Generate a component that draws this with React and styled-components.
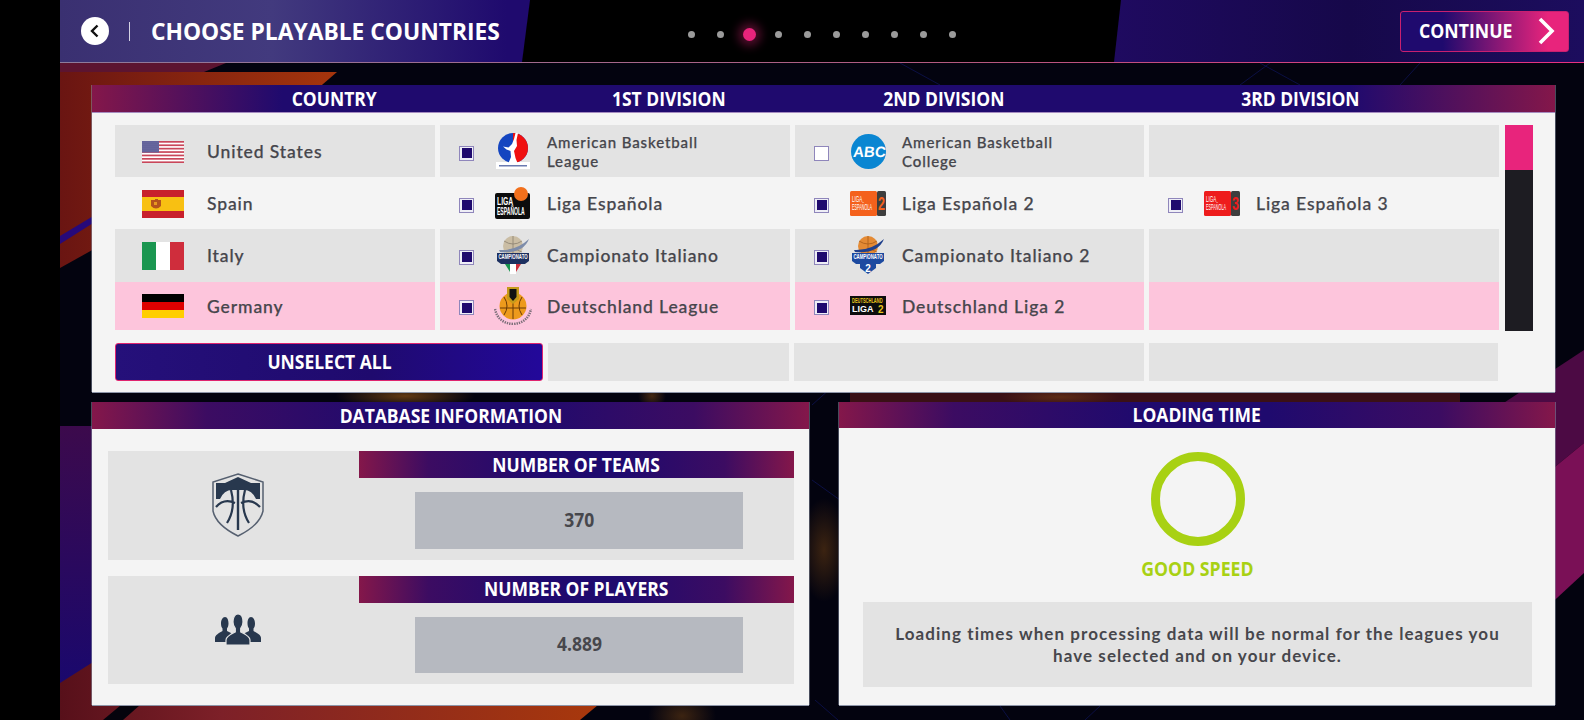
import React from "react";
import styled, { createGlobalStyle } from "styled-components";

const Global = createGlobalStyle`
  html, body { margin: 0; padding: 0; background: #000; overflow: hidden; }
  * { box-sizing: border-box; }
`;
const condensed = `"Open Sans", "Liberation Sans", sans-serif`;
const bodyFont = `Lato, "Noto Sans", sans-serif`;

const Screen = styled.div`position: relative; width: 1584px; height: 720px; background: #000; overflow: hidden;`;
const Backdrop = styled.svg`position: absolute; left: 0; top: 0; width: 1584px; height: 720px;`;
const Stage = styled.div`position: relative; margin-left: 60px; height: 720px; display: flex; flex-direction: column;`;

const TopBar = styled.header`
  display: flex; height: 63px; flex: none; background: #000; padding-bottom: 1px; position: relative;
  &::after { content: ""; position: absolute; left: 0; right: 0; bottom: 0; height: 1.5px; background: linear-gradient(90deg, #8d7c9c, #b5587f 60%, #e8307f); }
`;
const TitleTab = styled.div`
  width: 470px; display: flex; align-items: center; padding-left: 21px;
  background: linear-gradient(90deg, #3a3071 0%, #423a7e 45%, #1f0a6e 95%);
  clip-path: polygon(0 0, 100% 0, 462px 100%, 0 100%);
`;
const BackButton = styled.button`
  width: 28px; height: 28px; border-radius: 50%; background: #fff; border: 0; padding: 0;
  display: flex; align-items: center; justify-content: center;
`;
const Divider = styled.span`width: 1px; height: 19px; background: #d5d3e4; margin: 0 21px 0 20px;`;
const Condensed = styled.span`
  display: inline-block; white-space: nowrap; font-family: ${condensed}; font-weight: 700; color: #fff;
  transform: scaleX(${p => p.$sx || 0.92});
`;
const Title = styled(Condensed)`font-size: 24px; transform-origin: left center; line-height: 1; transform: scaleX(.95);`;
const Pager = styled.nav`flex: 1; display: flex; align-items: center; justify-content: center; gap: 22px; padding-top: 7px;`;
const Dot = styled.i`
  width: 7px; height: 7px; border-radius: 50%; background: #9b9b9b; display: block;
  ${p => p.$on && `width: 13px; height: 13px; margin: 0 -3px; background: #e8247c; box-shadow: 0 0 10px 5px rgba(232,36,124,.35);`}
`;
const ActionTab = styled.div`
  width: 470px; display: flex; align-items: center; justify-content: flex-end; padding-right: 15px;
  background: linear-gradient(90deg, #1f0a60, #16084a 50%, #1c0d5e);
  clip-path: polygon(7px 0, 100% 0, 100% 100%, 0 100%);
`;
const ContinueButton = styled.button`
  width: 169px; height: 41px; border: 1px solid #c8206f; border-radius: 3px; padding: 0 12px 0 18px;
  display: flex; align-items: center; justify-content: space-between;
  background: linear-gradient(90deg, #1f0a6e 0%, #1f0a6e 25%, #e8247c 88%);
`;
const ContinueLabel = styled(Condensed)`font-size: 19px; transform-origin: left center; transform: scaleX(.93);`;

const Content = styled.main`flex: 1; position: relative; padding: 22px 29px 15px 32px; display: flex; flex-direction: column; gap: 10px;`;
const Panel = styled.section`background: #f4f4f4; box-shadow: 0 1px 0 #8d95a8, 1px 0 0 rgba(140,150,170,.5), -1px 0 0 rgba(140,150,170,.5); display: flex; flex-direction: column;`;
const TablePanel = styled(Panel)`height: 307px;`;
const Heading = styled.div`
  height: ${p => p.$h || 27}px; flex: none; display: flex; align-items: center; justify-content: center; padding-top: 1px;
  background: linear-gradient(90deg, #84174a 0%, #3c0c62 16%, #1f0a6e 42%, #1f0a6e 60%, #3c0c62 84%, #84174a 100%);
`;
const HeadingLabel = styled(Condensed)`font-size: 19px; line-height: 1;`;
const TableHead = styled(Heading)`
  display: grid; grid-template-columns: 484px 186px 363px 351.5px 1fr; justify-items: center; align-items: center;
  background: linear-gradient(90deg, #84174a 0%, #1f0a6e 13%, #1f0a6e 86%, #84174a 100%);
  box-shadow: 0 1px 0 #a58cc0;
`;
const TableBody = styled.div`padding: 13px 0 0 23px;`;
const ListArea = styled.div`display: flex; gap: 6px;`;
const Rows = styled.div`width: 1384px; display: grid; grid-template-columns: 320px 350px 349px 350px; column-gap: 5px; grid-auto-rows: min-content;`;
const Cell = styled.div`
  height: ${p => p.$h}px; display: flex; align-items: center;
  background: ${p => p.$tone === "pink" ? "#fdc5dc" : p.$tone === "gray" ? "#e3e3e3" : "transparent"};
  padding-left: ${p => p.$country ? 27 : 19}px;
`;
const FlagSlot = styled.span`width: 42px; display: flex; flex: none; margin: 1px 23px 0 0;`;
const CellText = styled.span`
  font-family: ${bodyFont}; font-weight: 500; color: #46464c; letter-spacing: .9px; padding-top: 2px;
  -webkit-text-stroke: .25px #46464c;
  font-size: ${p => p.$small ? 15 : 17.5}px; line-height: ${p => p.$small ? 19 : 22}px; white-space: pre-line;
`;
const Check = styled.span`
  width: 15px; height: 15px; flex: none; margin-top: 4px; border: 1px solid #8f86bb; padding: 1.5px; background: #eeeef6; display: block;
  ${p => !p.$on && "background: #fff;"}
  &::after { content: ""; display: ${p => p.$on ? "block" : "none"}; width: 100%; height: 100%; background: #1f0a6e; }
`;
const LogoSlot = styled.span`width: 40px; height: 44px; flex: none; margin: 0 14px 0 19px; display: flex; align-items: center; justify-content: center;`;
const Scrollbar = styled.div`width: 28px; height: 206px; background: #1d1c22; flex: none;`;
const ScrollThumb = styled.div`height: 45px; background: #e8247c;`;
const Footer = styled.div`display: grid; grid-template-columns: 428px 241px 350px 349px; column-gap: 5px; margin-top: 12px;`;
const FooterCell = styled.div`height: 38px; background: #e3e3e3;`;
const UnselectButton = styled.button`
  height: 38px; border: 1px solid #e0246f; border-radius: 3px; display: flex; align-items: center; justify-content: center;
  background: linear-gradient(90deg, #25107a, #1f0a6e 60%, #23089a); padding: 0;
`;

const BottomRow = styled.div`display: grid; grid-template-columns: 717px 716px; column-gap: 30px; flex: 1;`;
const InfoBody = styled.div`flex: 1; padding: 22px 15px 0 16px; display: flex; flex-direction: column; gap: 16px;`;
const StatRow = styled.div`height: 108.5px; background: #e3e3e3; display: grid; grid-template-columns: 251px 1fr;`;
const StatIcon = styled.div`display: flex; align-items: center; justify-content: center; padding-left: 9px;`;
const StatValue = styled.div`
  height: 56.5px; margin: 14px 51px 0 56px; background: #b6b9c0; display: flex; align-items: center; justify-content: center;
`;
const ValueText = styled(Condensed)`font-size: 19px; color: #47474c; line-height: 1;`;
const LoadingBody = styled.div`flex: 1; padding: 24px 23px 18px 24px; display: flex; flex-direction: column; align-items: center;`;
const Ring = styled.div`width: 94px; height: 94px; border-radius: 50%; border: 9.5px solid #a8d113; flex: none;`;
const Speed = styled(Condensed)`font-size: 19px; font-weight: 700; line-height: 1; color: #a8d113; margin-top: 14px; transform: scaleX(.93);`;
const Notice = styled.div`
  width: 100%; height: 85px; margin-top: 23px; background: #e3e3e3; display: flex; align-items: center; justify-content: center; text-align: center;
  font-family: ${bodyFont}; font-weight: 700; font-size: 17px; line-height: 22px; letter-spacing: 1.08px; color: #47474c;
`;

const Backgrounds = () => (
  <Backdrop viewBox="0 0 1584 720" aria-hidden="true">
    <defs>
      <linearGradient id="rg" x1="0" x2="1" y1="0" y2="0"><stop offset="0" stopColor="#6a1512" /><stop offset="1" stopColor="#a5350c" /></linearGradient>
      <linearGradient id="rb" x1="0" x2="1" y1="0" y2="0"><stop offset="0" stopColor="#57101a" /><stop offset=".3" stopColor="#7d2028" /><stop offset="1" stopColor="#a8380c" /></linearGradient>
      <linearGradient id="pv" x1="0" x2="0" y1="0" y2="1"><stop offset="0" stopColor="#3c0a4c" /><stop offset="1" stopColor="#170870" /></linearGradient>
      <radialGradient id="gl"><stop offset="0" stopColor="#8a5014" stopOpacity=".7" /><stop offset="1" stopColor="#8a5014" stopOpacity="0" /></radialGradient>
    </defs>
    <rect x="60" y="60" width="1524" height="660" fill="#03030f" />
    <rect x="60" y="426" width="100" height="280" fill="url(#pv)" />
    <polygon points="60,72 337,72 200,190 60,268" fill="url(#rg)" />
    <polygon points="60,63 226,63 204,72 60,72" fill="#5c1430" />
    <polygon points="60,236 120,200 120,206 60,244" fill="#27097a" />
    <polygon points="60,683 120,645 598,645 598,705 580,720 60,720" fill="url(#rb)" />
    <polygon points="121,705 140,705 123,720 103,720" fill="#05030c" />
    <polygon points="1490,412 1584,350 1584,443 1490,520" fill="#4c0a44" />
    <polygon points="1490,520 1584,443 1584,573 1490,660" fill="#7a1056" />
    <ellipse cx="405" cy="396" rx="70" ry="12" fill="url(#gl)" />
    <ellipse cx="652" cy="396" rx="14" ry="12" fill="url(#gl)" opacity=".7" />
    <ellipse cx="682" cy="716" rx="34" ry="24" fill="url(#gl)" opacity=".6" />
    <ellipse cx="824" cy="550" rx="24" ry="52" fill="url(#gl)" opacity=".6" />
    <rect x="850" y="393" width="610" height="9" fill="#3a1016" />
    <ellipse cx="1060" cy="397" rx="60" ry="8" fill="url(#gl)" opacity=".6" />
    <g stroke="#101868" strokeWidth="1" fill="none" opacity=".6">
      <path d="M1270 63 L1240 85 M1260 63 L1300 85 M1420 63 L1400 85 M900 63 L940 85 M812 405 L840 380 M812 480 L840 500 M815 700 L838 720 M1000 706 L1010 720 M1100 706 L1085 720" />
    </g>
  </Backdrop>
);

const LogoFont = "Liberation Sans, Open Sans, sans-serif";
const Squeezed = ({ x, y, sx = 0.6, size, fill = "#fff", weight = 700, anchor, children }) => (
  <text transform={`translate(${x} ${y}) scale(${sx} 1)`} textAnchor={anchor} fontFamily={LogoFont} fontWeight={weight} fontSize={size} fill={fill}>{children}</text>
);

const USFlag = () => (
  <svg width="42" height="22" viewBox="0 0 42 22">
    <defs><pattern id="stars" width="2" height="2" patternUnits="userSpaceOnUse"><circle cx="1" cy="1" r=".45" fill="#c8c8e0" /></pattern></defs>
    <rect width="42" height="22" fill="#fff" />
    {[0, 3.4, 6.8, 10.2, 13.6, 17, 20.4].map(y => <rect key={y} y={y} width="42" height="1.7" fill="#c9475a" />)}
    <rect width="17" height="11.5" fill="#565692" />
    <rect width="17" height="11.5" fill="url(#stars)" />
  </svg>
);
const SpainFlag = () => (
  <svg width="42" height="28" viewBox="0 0 42 28">
    <rect width="42" height="28" fill="#c8202c" /><rect y="7" width="42" height="14" fill="#f8c012" />
    <path d="M9 10h4v-1h3v1h3v6q-5 5-10 0z" fill="#b5531c" /><rect x="12" y="12" width="3" height="3" fill="#e89a20" />
  </svg>
);
const ItalyFlag = () => (
  <svg width="42" height="28" viewBox="0 0 42 28">
    <rect width="14" height="28" fill="#1a9650" /><rect x="14" width="14" height="28" fill="#fff" /><rect x="28" width="14" height="28" fill="#cf2d3c" />
  </svg>
);
const GermanyFlag = () => (
  <svg width="42" height="24" viewBox="0 0 42 24">
    <rect width="42" height="8" fill="#000" /><rect y="8" width="42" height="8" fill="#dd0000" /><rect y="16" width="42" height="8" fill="#ffce00" />
  </svg>
);
const AmericanLogo = () => (
  <svg width="34" height="36" viewBox="0 0 34 36">
    <rect x="0" y="29" width="34" height="7" fill="#fff" />
    <circle cx="17" cy="15" r="15" fill="#1445c0" />
    <path d="M17 0a15 15 0 0 1 0 30z" fill="#f01010" />
    <path d="M19.500 0h2.500l-1.500 7 .5 6-3 5 1.500 7 2 5h-9l2.500-6-.5-6-4-1.500-3.500-3 5.500 1 3.500-3.500 2-5z" fill="#fff" />
    <rect x="3" y="32" width="28" height="1.500" fill="#6a7ab0" />
  </svg>
);
const LigaLogo = () => (
  <svg width="36" height="33" viewBox="0 0 36 33">
    <rect x="0" y="6" width="35" height="26" rx="2" fill="#0c0c0c" />
    <Squeezed x={2} y={18} sx={0.62} size={11}>LIGA</Squeezed>
    <Squeezed x={2} y={28} sx={0.46} size={11}>ESPAÑOLA</Squeezed>
    <circle cx="26" cy="7" r="7" fill="#f2701c" />
  </svg>
);
const CampionatoLogo = ({ two }) => (
  <svg width="34" height="38" viewBox="0 0 34 38">
    <circle cx="17" cy="10" r="10" fill={two ? "#e48a34" : "#cabda4"} />
    <path d="M17 0v20M8 5q9 6 18 0M8 16q9-5 18 0" stroke={two ? "#a85a18" : "#8a8070"} strokeWidth=".8" fill="none" />
    <path d="M3 14 Q20 15 33 3 Q27 18 4 16z" fill={two ? "#20408c" : "#7d8caa"} />
    {two && <path d="M9 26h16v6l-8 6-8-6z" fill="#1d4aa0" />}
    <path d="M1 17h32v8l-4 3h-24l-4-3z" fill={two ? "#1d4aa0" : "#1d3060"} />
    <Squeezed x={17} y={23} sx={0.62} size={7} anchor="middle">CAMPIONATO</Squeezed>
    {two ? (
      <Squeezed x={17} y={36} sx={1} size={10} anchor="middle" fill="#fff">2</Squeezed>
    ) : (
      <g><path d="M9 28h5v8z" fill="#1a9650" /><path d="M14 28h6v10h-6z" fill="#fff" /><path d="M20 28h5l-5 8z" fill="#cf2d3c" /></g>
    )}
  </svg>
);
const DeutschLogo = () => (
  <svg width="38" height="38" viewBox="0 0 38 38">
    <circle cx="19" cy="19" r="13.500" fill="#ed9a1c" />
    <path d="M6 21h26M19 6v26M10 10q6 9 0 18M28 10q-6 9 0 18" stroke="#6a3a06" strokeWidth="1" fill="none" />
    <path d="M13 0h12v12l-6 5-6-5z" fill="#c59a1a" /><path d="M15.500 2h7v8l-3.500 4-3.500-4z" fill="#111" />
    <path d="M1 22 Q4 36 19 37 Q34 36 37 22" stroke="#7d6f7a" strokeWidth="2.500" strokeDasharray="1.400 1" fill="none" />
  </svg>
);
const AbcLogo = () => (
  <svg width="35" height="35" viewBox="0 0 35 35">
    <circle cx="17.500" cy="17.500" r="17.500" fill="#0a86d2" />
    <text transform="translate(18 23) skewX(-6)" textAnchor="middle" fontFamily={LogoFont} fontWeight="700" fontSize="15" fill="#fff">ABC</text>
  </svg>
);
const LigaBadge = ({ color, n }) => (
  <svg width="36" height="25" viewBox="0 0 36 25">
    <rect width="27" height="25" rx="1.500" fill={color} />
    <rect x="27" width="9" height="25" rx="1.500" fill="#3e3e3e" />
    <Squeezed x={31.5} y={19} sx={0.7} size={18} anchor="middle" fill={color}>{n}</Squeezed>
    <Squeezed x={2} y={11} sx={0.5} size={9} weight={400}>LIGA</Squeezed>
    <Squeezed x={2} y={19} sx={0.42} size={9} weight={400}>ESPAÑOLA</Squeezed>
  </svg>
);
const DeutschBadge = () => (
  <svg width="36" height="19" viewBox="0 0 36 19">
    <rect width="36" height="19" fill="#0d0d0d" />
    <Squeezed x={2} y={7} sx={0.62} size={6.5} fill="#e8c41c">DEUTSCHLAND</Squeezed>
    <Squeezed x={2} y={16} sx={1} size={9}>LIGA</Squeezed>
    <Squeezed x={28} y={16.5} sx={1} size={10} fill="#e8c41c">2</Squeezed>
  </svg>
);
const ShieldIcon = () => (
  <svg width="52" height="64" viewBox="0 0 52 64">
    <path d="M26 1 L51 9 V38 Q48 52 26 63 Q4 52 1 38 V9 Z" fill="none" stroke="#566070" strokeWidth="1.500" />
    <path d="M4 10 L13 10 L26 4 L39 10 L48 10 V26 L44 26 Q40 17 32 17 H20 Q12 17 8 26 H4 Z" fill="#28384e" />
    <path d="M26 13 V57" stroke="#28384e" strokeWidth="2.400" />
    <path d="M19 17 Q24 36 15 50 M33 17 Q28 36 37 50 M4 34 Q12 25 23 30 M48 34 Q40 25 29 30" stroke="#28384e" strokeWidth="2.200" fill="none" />
  </svg>
);
const PeopleIcon = () => (
  <svg width="46" height="31" viewBox="0 0 46 31">
    <g fill="#28384e">
      <path d="M10 3c2.500 0 3.500 3 3.500 6.500 0 2-.7 4-1.500 5v2.500l4 2-3 9H0v-4c0-3 4-5 7.500-7v-2.500c-1-1-1.500-3-1.500-5C6 6 7.500 3 10 3z" />
      <path d="M36 3c-2.500 0-3.500 3-3.500 6.500 0 2 .7 4 1.500 5v2.500l-4 2 3 9h13v-4c0-3-4-5-7.500-7v-2.500c1-1 1.500-3 1.500-5C40 6 38.500 3 36 3z" />
      <path d="M23 0c3.500 0 5 4 5 8 0 3-1 5-2.300 6.500V18c4 2 9.300 4 9.300 8v5H11v-5c0-4 5.300-6 9.300-8v-3.500C19 13 18 11 18 8c0-4 1.500-8 5-8z" stroke="#e3e3e3" strokeWidth="1.200" />
    </g>
  </svg>
);

const rows = [
  { tone: "gray", h: 52, flag: <USFlag />, name: "United States", cells: [
    { on: true, logo: <AmericanLogo />, text: "American Basketball\nLeague", small: true },
    { on: false, logo: <AbcLogo />, text: "American Basketball\nCollege", small: true }, null] },
  { tone: "none", h: 52, flag: <SpainFlag />, name: "Spain", cells: [
    { on: true, logo: <LigaLogo />, text: "Liga Española" },
    { on: true, logo: <LigaBadge color="#f4611c" n="2" />, text: "Liga Española 2" },
    { on: true, logo: <LigaBadge color="#ee1c1c" n="3" />, text: "Liga Española 3" }] },
  { tone: "gray", h: 52.5, flag: <ItalyFlag />, name: "Italy", cells: [
    { on: true, logo: <CampionatoLogo />, text: "Campionato Italiano" },
    { on: true, logo: <CampionatoLogo two />, text: "Campionato Italiano 2" }, null] },
  { tone: "pink", h: 48.5, flag: <GermanyFlag />, name: "Germany", cells: [
    { on: true, logo: <DeutschLogo />, text: "Deutschland League" },
    { on: true, logo: <DeutschBadge />, text: "Deutschland Liga 2" }, null] },
];
const heads = ["COUNTRY", "1ST DIVISION", "2ND DIVISION", "3RD DIVISION"];
const stats = [
  { label: "NUMBER OF TEAMS", value: "370", icon: <ShieldIcon /> },
  { label: "NUMBER OF PLAYERS", value: "4.889", icon: <PeopleIcon /> },
];

export default function App() {
  return (
    <Screen>
      <Global />
      <Backgrounds />
      <Stage>
        <TopBar>
          <TitleTab>
            <BackButton aria-label="Back">
              <svg width="12" height="14" viewBox="0 0 12 14"><path d="M8.500 1.500 3 7l5.500 5.500" fill="none" stroke="#111" strokeWidth="2.400" /></svg>
            </BackButton>
            <Divider />
            <Title>CHOOSE PLAYABLE COUNTRIES</Title>
          </TitleTab>
          <Pager>{Array.from({ length: 10 }, (_, i) => <Dot key={i} $on={i === 2} />)}</Pager>
          <ActionTab>
            <ContinueButton>
              <ContinueLabel>CONTINUE</ContinueLabel>
              <svg width="18" height="28" viewBox="0 0 18 28"><path d="M2 2l12 12L2 26" fill="none" stroke="#fff" strokeWidth="3.600" /></svg>
            </ContinueButton>
          </ActionTab>
        </TopBar>
        <Content>
          <TablePanel>
            <TableHead>{heads.map(h => <HeadingLabel key={h}>{h}</HeadingLabel>)}</TableHead>
            <TableBody>
              <ListArea>
                <Rows>
                  {rows.map(r => (
                    <React.Fragment key={r.name}>
                      <Cell $tone={r.tone} $h={r.h} $country>
                        <FlagSlot>{r.flag}</FlagSlot>
                        <CellText>{r.name}</CellText>
                      </Cell>
                      {r.cells.map((c, i) => (
                        <Cell key={i} $tone={r.tone} $h={r.h}>
                          {c && <>
                            <Check $on={c.on} />
                            <LogoSlot>{c.logo}</LogoSlot>
                            <CellText $small={c.small}>{c.text}</CellText>
                          </>}
                        </Cell>
                      ))}
                    </React.Fragment>
                  ))}
                </Rows>
                <Scrollbar><ScrollThumb /></Scrollbar>
              </ListArea>
              <Footer>
                <UnselectButton><HeadingLabel>UNSELECT ALL</HeadingLabel></UnselectButton>
                <FooterCell /><FooterCell /><FooterCell />
              </Footer>
            </TableBody>
          </TablePanel>
          <BottomRow>
            <Panel>
              <Heading><HeadingLabel>DATABASE INFORMATION</HeadingLabel></Heading>
              <InfoBody>
                {stats.map(s => (
                  <StatRow key={s.label}>
                    <StatIcon>{s.icon}</StatIcon>
                    <div>
                      <Heading><HeadingLabel>{s.label}</HeadingLabel></Heading>
                      <StatValue><ValueText>{s.value}</ValueText></StatValue>
                    </div>
                  </StatRow>
                ))}
              </InfoBody>
            </Panel>
            <Panel>
              <Heading $h={26}><HeadingLabel>LOADING TIME</HeadingLabel></Heading>
              <LoadingBody>
                <Ring />
                <Speed>GOOD SPEED</Speed>
                <Notice>Loading times when processing data will be normal for the leagues you<br />have selected and on your device.</Notice>
              </LoadingBody>
            </Panel>
          </BottomRow>
        </Content>
      </Stage>
    </Screen>
  );
}
